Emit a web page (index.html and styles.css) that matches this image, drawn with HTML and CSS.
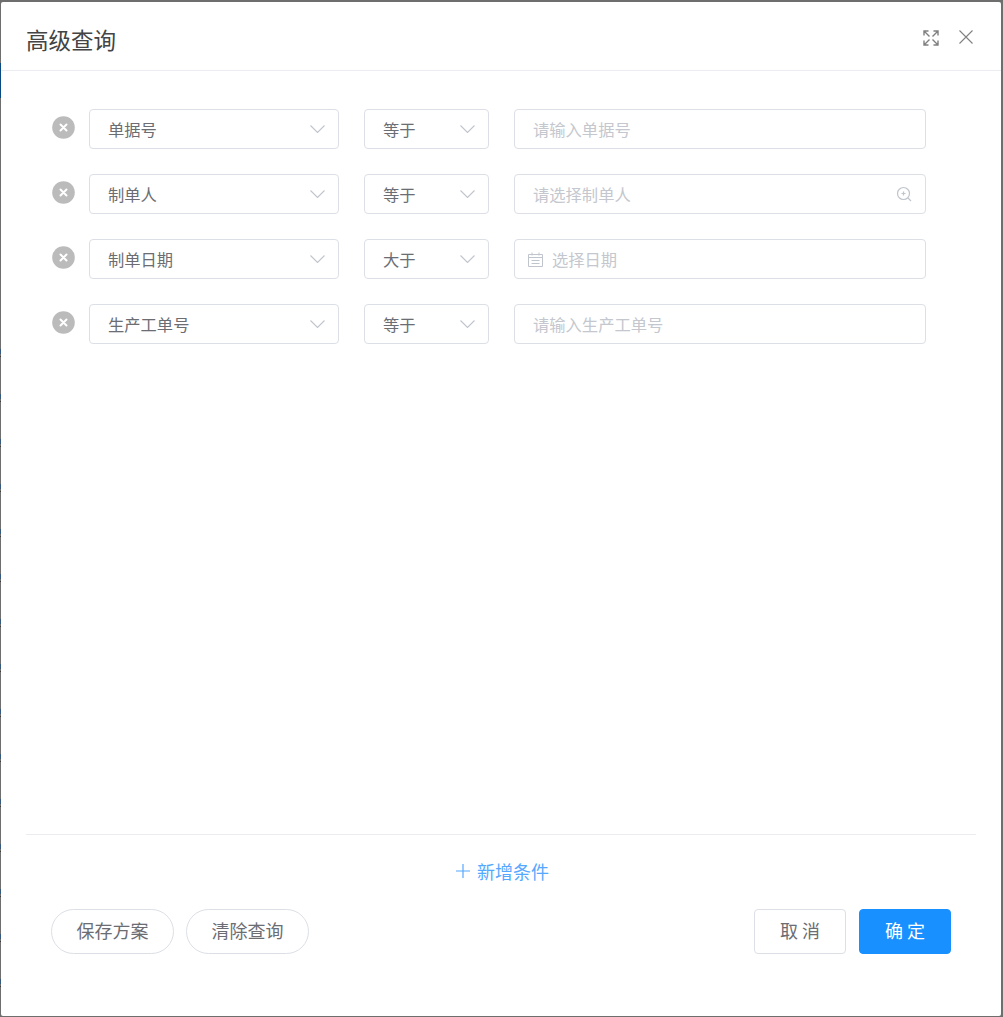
FILE: index.html
```html
<!DOCTYPE html>
<html lang="zh">
<head>
<meta charset="utf-8">
<title>高级查询</title>
<link rel="stylesheet" href="styles.css">
</head>
<body>
<div class="dialog">
  <header class="head">
    <h1 class="title">高级查询</h1>
    <div class="head-tools">
      <svg class="icon-expand" viewBox="0 0 16 16" width="16" height="16"><path d="M1 5.500V1h4.500M1 1l5.500 5.500M10.500 1H15v4.500M15 1L9.500 6.500M1 10.500V15h4.500M1 15l5.500-5.500M15 10.500V15h-4.500M15 15L9.500 9.500"/></svg>
      <svg class="icon-close" viewBox="0 0 14 14" width="14" height="14"><path d="M.5.5l13 13M13.500.5l-13 13"/></svg>
    </div>
  </header>
  <main class="rows">
    <div class="row">
      <svg class="remove" viewBox="0 0 23 23" width="23" height="23"><circle cx="11.5" cy="11.5" r="11.3"/><path d="M8.500 8.500l6 6M14.500 8.500l-6 6"/></svg>
      <div class="field field-name"><span>单据号</span><svg class="chev" viewBox="0 0 15 8" width="15" height="8"><path d="M.5.5l7 7 7-7"/></svg></div>
      <div class="field field-op"><span>等于</span><svg class="chev" viewBox="0 0 15 8" width="15" height="8"><path d="M.5.5l7 7 7-7"/></svg></div>
      <div class="field field-value"><span class="ph">请输入单据号</span></div>
    </div>
    <div class="row">
      <svg class="remove" viewBox="0 0 23 23" width="23" height="23"><circle cx="11.5" cy="11.5" r="11.3"/><path d="M8.500 8.500l6 6M14.500 8.500l-6 6"/></svg>
      <div class="field field-name"><span>制单人</span><svg class="chev" viewBox="0 0 15 8" width="15" height="8"><path d="M.5.5l7 7 7-7"/></svg></div>
      <div class="field field-op"><span>等于</span><svg class="chev" viewBox="0 0 15 8" width="15" height="8"><path d="M.5.5l7 7 7-7"/></svg></div>
      <div class="field field-value"><span class="ph">请选择制单人</span><svg class="icon-search" viewBox="0 0 16 16" width="16" height="16"><circle cx="7.5" cy="7.5" r="6"/><path d="M12 12l3 3M5.500 7.500h4M7.500 5.500v4"/></svg></div>
    </div>
    <div class="row">
      <svg class="remove" viewBox="0 0 23 23" width="23" height="23"><circle cx="11.5" cy="11.5" r="11.3"/><path d="M8.500 8.500l6 6M14.500 8.500l-6 6"/></svg>
      <div class="field field-name"><span>制单日期</span><svg class="chev" viewBox="0 0 15 8" width="15" height="8"><path d="M.5.5l7 7 7-7"/></svg></div>
      <div class="field field-op"><span>大于</span><svg class="chev" viewBox="0 0 15 8" width="15" height="8"><path d="M.5.5l7 7 7-7"/></svg></div>
      <div class="field field-value field-date"><svg class="icon-date" viewBox="0 0 15 15" width="15" height="15"><path d="M.5 2.500h14v12H.5zM.5 5.500h14M4 .500v3M11 .500v3M3.500 8.500h8M3.500 11.500h8"/></svg><span class="ph">选择日期</span></div>
    </div>
    <div class="row">
      <svg class="remove" viewBox="0 0 23 23" width="23" height="23"><circle cx="11.5" cy="11.5" r="11.3"/><path d="M8.500 8.500l6 6M14.500 8.500l-6 6"/></svg>
      <div class="field field-name"><span>生产工单号</span><svg class="chev" viewBox="0 0 15 8" width="15" height="8"><path d="M.5.5l7 7 7-7"/></svg></div>
      <div class="field field-op"><span>等于</span><svg class="chev" viewBox="0 0 15 8" width="15" height="8"><path d="M.5.5l7 7 7-7"/></svg></div>
      <div class="field field-value"><span class="ph">请输入生产工单号</span></div>
    </div>
  </main>
  <footer class="foot">
    <div class="add"><svg class="icon-plus" viewBox="0 0 14 14" width="14" height="14"><path d="M0 7h14M7 0v14"/></svg><span>新增条件</span></div>
    <div class="actions">
      <div class="group">
        <button class="btn pill">保存方案</button>
        <button class="btn pill">清除查询</button>
      </div>
      <div class="group group-right">
        <button class="btn rect">取 消</button>
        <button class="btn rect primary">确 定</button>
      </div>
    </div>
  </footer>
</div>
</body>
</html>
```
FILE: styles.css
```css
* { box-sizing: border-box; }
html, body { height: 100%; }
body {
  margin: 0;
  padding: 2px 2px 1px 1px;
  background-color: #6e6e6e;
  background-image:
    linear-gradient(#0b4a80, #0b4a80),
    repeating-linear-gradient(#6e6e6e 0 4px, #36597c 4px 9px, #6e6e6e 9px 11px, #3c3c3c 11px 12px, #6e6e6e 12px 45px);
  background-size: 1px 35px, 1px 100%;
  background-position: 0 63px, 0 345px;
  background-repeat: no-repeat, no-repeat;
  font-family: "Noto Sans CJK SC", "Liberation Sans", sans-serif;
  color: #6b6d72;
}
.dialog {
  height: 100%;
  background: #fff;
  border-radius: 2px;
  display: flex;
  flex-direction: column;
}
.head {
  height: 69px;
  flex: none;
  border-bottom: 1px solid #ebebf2;
  padding: 0 28px 0 25px;
  display: flex;
  align-items: flex-start;
  justify-content: space-between;
}
.title {
  margin: 0;
  font-size: 22.5px;
  font-weight: 400;
  line-height: 32px;
  color: #444;
  padding-top: 21px;
}
.head-tools {
  display: flex;
  align-items: center;
  gap: 20px;
  padding-top: 28px;
}
.head-tools svg { fill: none; stroke: #808080; }
.icon-expand { stroke-width: 1.4; }
.icon-close { stroke-width: 1.1; stroke: #8f8f8f; position: relative; top: -1px; }
.rows {
  flex: 1;
  padding: 38px 0 0 51px;
  display: flex;
  flex-direction: column;
  gap: 25px;
}
.row { display: flex; align-items: flex-start; height: 40px; }
.remove { flex: none; margin: 7px 14px 0 0; }
.remove circle { fill: #bbb; }
.remove path { stroke: #fff; stroke-width: 2; fill: none; stroke-linecap: round; }
.field {
  height: 40px;
  border: 1px solid #dcdfe6;
  border-radius: 4px;
  display: flex;
  align-items: center;
  justify-content: space-between;
  font-size: 16.3px;
  line-height: 36px;
  padding: 0 13px 0 18px;
  color: #6b6d72;
}
.field > span { margin-top: -1px; }
.field-name { width: 250px; margin-right: 25px; }
.field-op { width: 125px; margin-right: 25px; }
.field-value { width: 412px; }
.field-date { justify-content: flex-start; gap: 9px; padding-left: 13px; }
.chev { fill: none; stroke: #c0c4cc; stroke-width: 1.1; }
.ph { color: #c4c7ce; }
.icon-search { fill: none; stroke: #c0c4cc; stroke-width: 1.2; }
.icon-date { fill: none; stroke: #c0c4cc; stroke-width: 1; }
.foot { flex: none; margin: 0 25px; border-top: 1px solid #ebebf2; height: 182px; }
.add {
  margin-top: 22px;
  display: flex;
  justify-content: center;
  align-items: center;
  gap: 7px;
  font-size: 18px;
  line-height: 28px;
  color: #55a8ff;
}
.icon-plus { stroke: #55a8ff; stroke-width: 1.2; fill: none; margin-left: 3px; }
.actions {
  margin-top: 24px;
  padding: 0 25px;
  display: flex;
  justify-content: space-between;
}
.group { display: flex; gap: 12px; }
.group-right { gap: 13px; }
.btn {
  height: 45px;
  font-family: inherit;
  font-size: 18px;
  line-height: 38px;
  color: #6b6d72;
  background: #fff;
  border: 1px solid #dcdfe6;
  padding: 0 0 4px;
}
.pill { width: 123px; border-radius: 23px; }
.rect { width: 92px; border-radius: 4px; }
.primary { background: #1890ff; border-color: #1890ff; color: #fff; }
```
